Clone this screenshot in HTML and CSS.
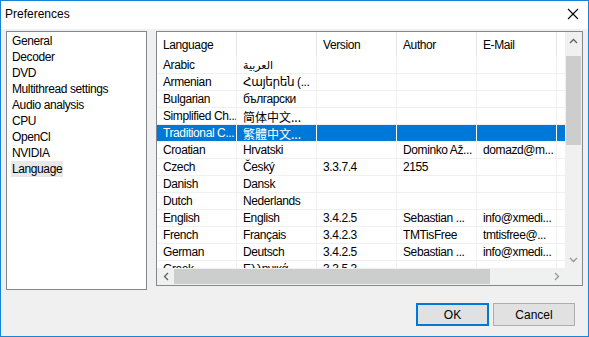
FILE: index.html
```html
<!DOCTYPE html>
<html>
	<head>
		<meta charset="UTF-8">
		<title>Preferences</title>
		<link rel="stylesheet" href="styles.css">
	</head>
	<body>
		<div class="window">
			<div class="titlebar">
				<span class="title">Preferences</span>
				<span class="close">
					<svg width="12" height="12" viewBox="0 0 12 12"><path d="M1 1 L11 11 M11 1 L1 11" stroke="#000" stroke-width="1.1" fill="none"/></svg>
				</span>
			</div>
			<div class="content">
				<div class="main">
					<ul class="nav">
						<li>General</li>
						<li>Decoder</li>
						<li>DVD</li>
						<li>Multithread settings</li>
						<li>Audio analysis</li>
						<li>CPU</li>
						<li>OpenCl</li>
						<li>NVIDIA</li>
						<li class="current">Language</li>
					</ul>
					<div class="panel">
						<div class="grid">
							<div class="row head">
								<div>Language</div><div></div><div>Version</div><div>Author</div><div>E-Mail</div><div class="fill"></div>
							</div>
							<div class="rows">
								<div class="row"><div>Arabic</div><div class="ar">العربية</div><div></div><div></div><div></div><div class="fill"></div></div>
								<div class="row"><div>Armenian</div><div>Հայերեն (...</div><div></div><div></div><div></div><div class="fill"></div></div>
								<div class="row"><div>Bulgarian</div><div>български</div><div></div><div></div><div></div><div class="fill"></div></div>
								<div class="row"><div>Simplified Ch...</div><div class="cjk">简体中文...</div><div></div><div></div><div></div><div class="fill"></div></div>
								<div class="row sel"><div>Traditional C...</div><div class="cjk">繁體中文...</div><div></div><div></div><div></div><div class="fill"></div></div>
								<div class="row"><div>Croatian</div><div>Hrvatski</div><div></div><div>Dominko Až...</div><div>domazd@m...</div><div class="fill"></div></div>
								<div class="row"><div>Czech</div><div>Český</div><div>3.3.7.4</div><div>2155</div><div></div><div class="fill"></div></div>
								<div class="row"><div>Danish</div><div>Dansk</div><div></div><div></div><div></div><div class="fill"></div></div>
								<div class="row"><div>Dutch</div><div>Nederlands</div><div></div><div></div><div></div><div class="fill"></div></div>
								<div class="row"><div>English</div><div>English</div><div>3.4.2.5</div><div>Sebastian ...</div><div>info@xmedi...</div><div class="fill"></div></div>
								<div class="row"><div>French</div><div>Français</div><div>3.4.2.3</div><div>TMTisFree</div><div>tmtisfree@...</div><div class="fill"></div></div>
								<div class="row"><div>German</div><div>Deutsch</div><div>3.4.2.5</div><div>Sebastian ...</div><div>info@xmedi...</div><div class="fill"></div></div>
								<div class="row"><div>Greek</div><div>Ελληνικά</div><div>3.3.5.3</div><div></div><div></div><div class="fill"></div></div>
							</div>
						</div>
						<div class="vscroll">
							<span class="arrow">
								<svg width="9" height="6" viewBox="0 0 9 6"><path d="M1 5 L4.5 1.5 L8 5" stroke="#606060" stroke-width="1.3" fill="none"/></svg>
							</span>
							<span class="vthumb"></span>
							<span class="arrow down">
								<svg width="9" height="6" viewBox="0 0 9 6"><path d="M1 1 L4.5 4.5 L8 1" stroke="#969696" stroke-width="1.3" fill="none"/></svg>
							</span>
						</div>
						<div class="hscroll">
							<span class="arrow">
								<svg width="6" height="9" viewBox="0 0 6 9"><path d="M5 1 L1.5 4.5 L5 8" stroke="#606060" stroke-width="1.3" fill="none"/></svg>
							</span>
							<span class="hthumb"></span>
							<span class="arrow right">
								<svg width="6" height="9" viewBox="0 0 6 9"><path d="M1 1 L4.5 4.5 L1 8" stroke="#969696" stroke-width="1.3" fill="none"/></svg>
							</span>
						</div>
						<div class="corner"></div>
					</div>
				</div>
				<div class="buttons">
					<button class="btn default">OK</button>
					<button class="btn cancel">Cancel</button>
				</div>
			</div>
		</div>
	</body>
</html>
```

FILE: styles.css
```css
* {
	margin: 0;
	padding: 0;
	box-sizing: border-box;
}
body {
	font-family: "Liberation Sans", "DejaVu Sans", "Noto Sans CJK TC", sans-serif;
	font-size: 12px;
	color: #000;
	background: #fff;
}
ul {
	list-style: none;
}
.window {
	width: 589px;
	height: 337px;
	border: 1px solid #1883d7;
	background: #f0f0f0;
	display: flex;
	flex-direction: column;
}
.titlebar {
	height: 28px;
	background: #fff;
	display: flex;
	align-items: center;
	justify-content: space-between;
	padding: 0 9px 2px 4px;
}
.title {
	font-size: 12px;
}
.close {
	display: flex;
	align-items: center;
}
.content {
	flex: 1;
	padding: 2px 5px 10px 5px;
	display: flex;
	flex-direction: column;
	letter-spacing: -0.4px;
}
.main {
	display: flex;
	gap: 9px;
	align-items: flex-start;
}
.nav {
	width: 141px;
	height: 259px;
	border: 1px solid #828790;
	background: #fff;
	padding: 1px 4px;
}
.nav li {
	height: 16px;
	line-height: 16px;
	padding: 0 1px;
	display: table;
	white-space: nowrap;
}
.nav li.current {
	background: #e8e8e8;
}
.panel {
	width: 427px;
	height: 255px;
	border: 1px solid #828790;
	background: #fff;
	display: grid;
	grid-template-columns: 408px 17px;
	grid-template-rows: 236px 17px;
}
.grid {
	overflow: hidden;
}
.row {
	display: grid;
	grid-template-columns: 80px 80px 80px 80px 80px 8px;
	height: 17px;
	border-bottom: 1px solid #f0f0f0;
}
.row > div {
	height: 16px;
	border-right: 1px solid #f0f0f0;
	padding-left: 6px;
	line-height: 17px;
	white-space: nowrap;
	overflow: hidden;
}
.row > div.fill {
	border-right: none;
}
.row.head {
	height: 25px;
	border-bottom: none;
}
.row.head > div {
	height: 25px;
	line-height: 26px;
	border-right-color: #e5e5e5;
}
.rows {
	height: 211px;
	overflow: hidden;
}
.row.sel {
	background: #0078d7;
	color: #fff;
}
.row.sel > div {
	border-right-color: #fff;
}
.cjk {
	font-family: "Noto Sans CJK TC", "Noto Sans CJK SC", sans-serif;
	font-size: 12px;
	letter-spacing: 0;
}
.ar {
	font-size: 11px;
	letter-spacing: 0;
}
.vscroll {
	background: #f0f0f0;
	display: flex;
	flex-direction: column;
	align-items: center;
}
.vscroll .arrow {
	height: 17px;
	display: flex;
	align-items: center;
	justify-content: center;
}
.vthumb {
	width: 15px;
	height: 89px;
	margin-top: 7px;
	background: #cdcdcd;
}
.vscroll .down {
	margin-top: auto;
}
.hscroll {
	background: #f0f0f0;
	display: flex;
	align-items: center;
}
.hscroll .arrow {
	width: 17px;
	height: 17px;
	display: flex;
	align-items: center;
	justify-content: center;
}
.hthumb {
	width: 316px;
	height: 15px;
	background: #cdcdcd;
}
.hscroll .right {
	margin-left: auto;
}
.corner {
	background: #f0f0f0;
}
.buttons {
	display: flex;
	justify-content: flex-end;
	gap: 4px;
	margin-top: 13px;
	padding-right: 8px;
}
.btn {
	height: 23px;
	background: #e1e1e1;
	border: 1px solid #adadad;
	font-family: "Liberation Sans", sans-serif;
	font-size: 12px;
	color: #000;
}
.btn.default {
	width: 73px;
	border: 2px solid #0078d7;
}
.btn.cancel {
	width: 82px;
}
```
